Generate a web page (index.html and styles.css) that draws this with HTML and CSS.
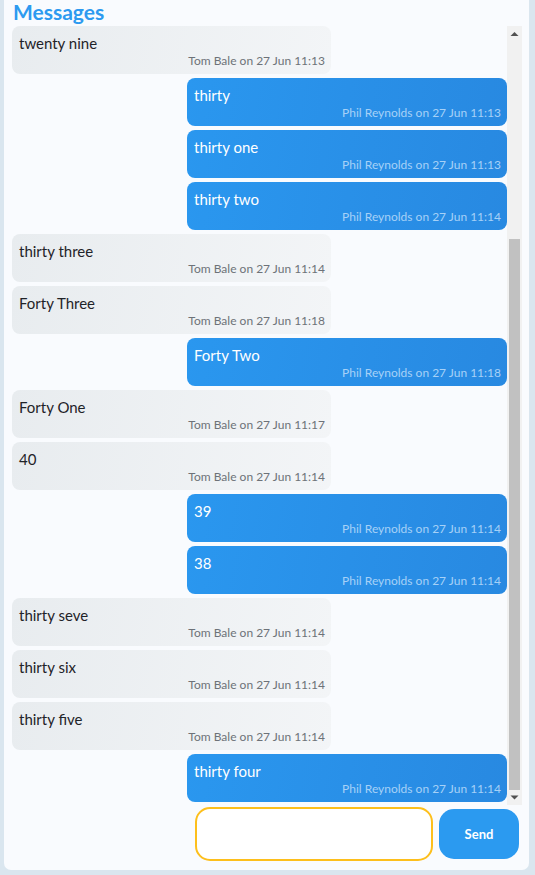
FILE: index.html
```html
<!DOCTYPE html>
<html>
<head>
<meta charset="utf-8">
<link rel="stylesheet" href="styles.css">
</head>
<body>
<div class="card">
  <h1 class="title">Messages</h1>
  <div class="pane">
    <div class="list">
      <div class="msg sent"><div class="text">thirty four</div><div class="meta">Phil Reynolds on 27 Jun 11:14</div></div>
      <div class="msg recv"><div class="text">thirty five</div><div class="meta">Tom Bale on 27 Jun 11:14</div></div>
      <div class="msg recv"><div class="text">thirty six</div><div class="meta">Tom Bale on 27 Jun 11:14</div></div>
      <div class="msg recv"><div class="text">thirty seve</div><div class="meta">Tom Bale on 27 Jun 11:14</div></div>
      <div class="msg sent"><div class="text">38</div><div class="meta">Phil Reynolds on 27 Jun 11:14</div></div>
      <div class="msg sent"><div class="text">39</div><div class="meta">Phil Reynolds on 27 Jun 11:14</div></div>
      <div class="msg recv"><div class="text">40</div><div class="meta">Tom Bale on 27 Jun 11:14</div></div>
      <div class="msg recv"><div class="text">Forty One</div><div class="meta">Tom Bale on 27 Jun 11:17</div></div>
      <div class="msg sent"><div class="text">Forty Two</div><div class="meta">Phil Reynolds on 27 Jun 11:18</div></div>
      <div class="msg recv"><div class="text">Forty Three</div><div class="meta">Tom Bale on 27 Jun 11:18</div></div>
      <div class="msg recv"><div class="text">thirty three</div><div class="meta">Tom Bale on 27 Jun 11:14</div></div>
      <div class="msg sent"><div class="text">thirty two</div><div class="meta">Phil Reynolds on 27 Jun 11:14</div></div>
      <div class="msg sent"><div class="text">thirty one</div><div class="meta">Phil Reynolds on 27 Jun 11:13</div></div>
      <div class="msg sent"><div class="text">thirty</div><div class="meta">Phil Reynolds on 27 Jun 11:13</div></div>
      <div class="msg recv"><div class="text">twenty nine</div><div class="meta">Tom Bale on 27 Jun 11:13</div></div>
      <div class="msg sent"><div class="text">twenty eight</div><div class="meta">Phil Reynolds on 27 Jun 11:12</div></div>
      <div class="msg recv"><div class="text">twenty seven</div><div class="meta">Tom Bale on 27 Jun 11:12</div></div>
      <div class="msg sent"><div class="text">twenty six</div><div class="meta">Phil Reynolds on 27 Jun 11:12</div></div>
      <div class="msg recv"><div class="text">twenty five</div><div class="meta">Tom Bale on 27 Jun 11:11</div></div>
      <div class="msg sent"><div class="text">twenty four</div><div class="meta">Phil Reynolds on 27 Jun 11:11</div></div>
    </div>
    <div class="scrollbar" aria-hidden="true">
      <div class="sb-btn">
        <svg width="15" height="15" viewBox="0 0 15 15"><polygon points="3.5,10 11.5,10 7.5,6" fill="#505050"/></svg>
      </div>
      <div class="sb-track"><div class="sb-thumb"></div></div>
      <div class="sb-btn">
        <svg width="15" height="15" viewBox="0 0 15 15"><polygon points="3.5,5.5 11.5,5.5 7.5,9.5" fill="#505050"/></svg>
      </div>
    </div>
  </div>
  <form class="composer">
    <input class="input" type="text">
    <button class="send" type="button">Send</button>
  </form>
</div>
</body>
</html>
```
FILE: styles.css
```css
html, body {
  margin: 0;
  padding: 0;
}
body {
  background: #dae6ef;
  font-family: Lato, "Noto Sans", sans-serif;
  height: 875px;
  overflow: hidden;
}
.card {
  margin-left: 4px;
  width: 525px;
  height: 870px;
  box-sizing: border-box;
  background: #f9fbfe;
  border-radius: 0 0 7px 7px;
  padding: 0 7px 0 8px;
  display: flex;
  flex-direction: column;
}
.title {
  margin: 0 0 0 1px;
  font-size: 21px;
  line-height: 24px;
  font-weight: 700;
  color: #2d9af0;
  height: 26px;
}
.pane {
  display: flex;
  height: 779px;
}
.list {
  flex: 1;
  min-width: 0;
  overflow-y: auto;
  scrollbar-width: none;
  display: flex;
  flex-direction: column-reverse;
  gap: 4px;
  padding: 20px 0 3px 0;
  box-sizing: border-box;
}
.scrollbar {
  flex: none;
  width: 15px;
  background: #f1f1f1;
  display: flex;
  flex-direction: column;
}
.sb-btn {
  height: 15px;
  flex: none;
}
.sb-btn svg {
  display: block;
}
.sb-track {
  flex: 1;
  padding: 198px 2px 0 2px;
}
.sb-thumb {
  height: 551px;
  background: #c1c1c1;
}
.msg {
  flex: none;
  width: 320px;
  height: 48px;
  box-sizing: border-box;
  border-radius: 8px;
  padding: 7px 6px 5px 7px;
}
.recv {
  background: linear-gradient(100deg, #e8ecef, #f3f5f7);
  color: #1f2328;
  width: 319px;
}
.sent {
  margin-left: auto;
  background: linear-gradient(100deg, #2a97ef, #2889e1);
  color: #ffffff;
}
.text {
  font-size: 15px;
  line-height: 20px;
}
.meta {
  font-size: 12px;
  line-height: 16px;
  text-align: right;
}
.recv .meta {
  color: #6d7278;
}
.sent .meta {
  color: #a6d1f7;
}
.composer {
  display: flex;
  justify-content: flex-end;
  align-items: center;
  gap: 6px;
  margin: 2px 3px 0 0;
}
.input {
  width: 238px;
  height: 54px;
  box-sizing: border-box;
  border: 2px solid #fdbf1c;
  border-radius: 15px;
  background: #ffffff;
  outline: none;
}
.send {
  width: 80px;
  height: 50px;
  border: none;
  border-radius: 15px;
  background: #2b9af0;
  color: #ffffff;
  font-family: Lato, "Noto Sans", sans-serif;
  font-weight: 700;
  font-size: 13px;
}
```
